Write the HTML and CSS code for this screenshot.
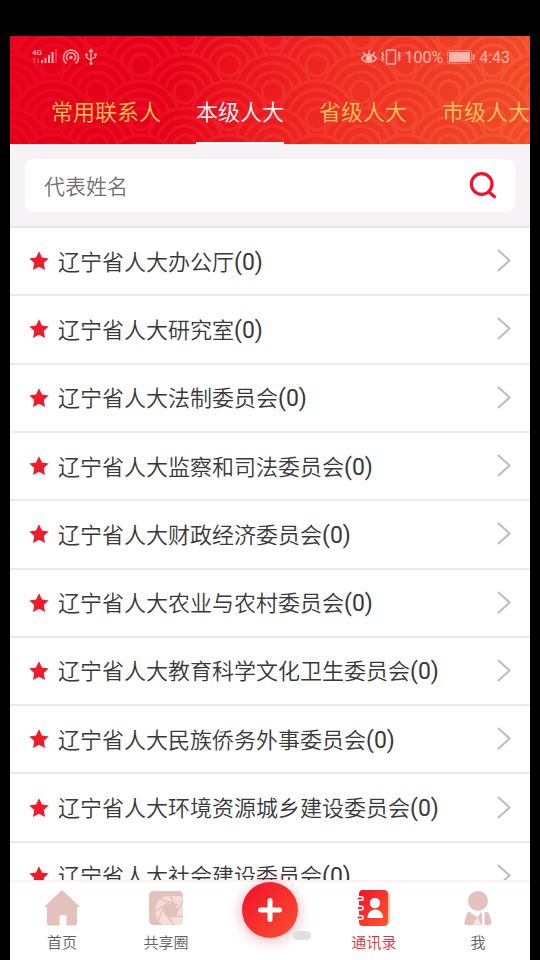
FILE: index.html
```html
<!DOCTYPE html>
<html lang="zh-CN">
<head>
<meta charset="utf-8">
<meta name="viewport" content="width=device-width, initial-scale=1">
<title>通讯录</title>
<link rel="stylesheet" href="styles.css">
</head>
<body>
<svg class="defs" aria-hidden="true">
  <defs>
    <g id="rings" fill="#000" stroke="#fff" stroke-width="3.400">
      <circle r="38"/><circle r="29"/><circle r="20"/><circle r="11"/>
    </g>
    <symbol id="star" viewBox="0 0 20 20"><path fill="#ee1c2b" d="M10 .3l3 6.200 6.700.9-4.900 4.700 1.200 6.800L10 15.700l-6 3.200 1.200-6.800L.3 7.400l6.700-.9z"/></symbol>
    <symbol id="chevron" viewBox="0 0 14 24"><path fill="none" stroke="#bcbcbc" stroke-width="2" d="M1 1l11.500 10.500L1 22"/></symbol>
    <linearGradient id="warm" x1="0" y1="0" x2="1" y2="1"><stop offset="0" stop-color="#f0112a"/><stop offset="1" stop-color="#ff5730"/></linearGradient>
  </defs>
</svg>
<div class="phone">
  <header class="header">
    <svg class="waves" aria-hidden="true">
      <defs>
        <pattern id="scales" x="-1" y="2" width="88" height="54" patternUnits="userSpaceOnUse">
          <use href="#rings" x="44" y="-27"/>
          <use href="#rings" x="0" y="0"/><use href="#rings" x="88" y="0"/>
          <use href="#rings" x="44" y="27"/>
          <use href="#rings" x="0" y="54"/><use href="#rings" x="88" y="54"/>
          <use href="#rings" x="44" y="81"/>
        </pattern>
        <mask id="scaleMask"><rect width="100%" height="100%" fill="url(#scales)"/></mask>
        <linearGradient id="tint"><stop offset="0" stop-color="#ff3050" stop-opacity=".16"/><stop offset="1" stop-color="#ff7850" stop-opacity=".32"/></linearGradient>
      </defs>
      <rect width="100%" height="100%" fill="url(#tint)" mask="url(#scaleMask)"/>
    </svg>
    <div class="status">
      <div class="status-group">
        <svg width="26" height="20" viewBox="0 0 26 20" fill="none" stroke="currentColor">
          <text class="network" x="0" y="8">4G</text>
          <path stroke-width="1" opacity=".5" d="M2.500 11v5M1 12.500L2.500 11M6 11v5M6 16l1.500-1.500"/>
          <path stroke-width="2" d="M10 13v3M13.500 11v5M17 8v8M20.500 5v11"/><path stroke-width="2" opacity=".3" d="M24 2v14"/>
        </svg>
        <svg width="18" height="18" viewBox="0 0 18 18" fill="none" stroke="currentColor" stroke-width="1.500">
          <path d="M4.500 15.500a7.500 7.500 0 1 1 9 0M6 12.500a4.500 4.500 0 1 1 6 0"/><circle cx="9" cy="9.500" r="1.700" fill="currentColor" stroke="none"/>
        </svg>
        <svg width="14" height="18" viewBox="0 0 14 18" fill="none" stroke="currentColor" stroke-width="1.300">
          <path d="M7 2v13M7 12.500L2.500 9.500V6M7 11l4.500-2V6M5 4l2-2.500L9 4"/><circle cx="7" cy="15.500" r="1.500" fill="currentColor" stroke="none"/><circle cx="2.500" cy="6.500" r="1.200" fill="currentColor" stroke="none"/><path d="M10.200 5.500h2.600v2h-2.600z" fill="currentColor" stroke="none"/>
        </svg>
      </div>
      <div class="status-group tight">
        <svg width="18" height="16" viewBox="0 0 18 16" fill="none" stroke="currentColor" stroke-width="1.500">
          <path d="M1.500 9.500c4-5.500 11-5.500 15 0-4 5-11 5-15 0zM3 3l2 2.500M9 1.500V5M15 3l-2 2.500"/><circle cx="9" cy="9.500" r="2.500" fill="currentColor"/>
        </svg>
        <svg width="20" height="18" viewBox="1 0 20 18" fill="none" stroke="currentColor" stroke-width="1.400">
          <rect x="6.500" y="2" width="9" height="14" rx="1"/><path d="M3.500 4L2 5.500 3.500 7 2 8.500 3.500 10 2 11.500 3.500 13M18.500 4L20 5.500 18.500 7 20 8.500 18.500 10 20 11.500 18.500 13"/>
        </svg>
        <span>100%</span>
        <svg width="30" height="14" viewBox="-1 0 30 14" fill="none" stroke="currentColor">
          <rect x=".7" y=".7" width="23.600" height="12.600" rx="1.500" opacity=".6"/><rect x="2" y="2" width="21" height="10" fill="currentColor" stroke="none"/><path stroke-width="1.600" d="M26.500 4v6"/>
        </svg>
        <span>4:43</span>
      </div>
    </div>
    <nav class="tabs">
      <a href="#common">常用联系人</a>
      <a href="#own" class="active" aria-current="page">本级人大</a>
      <a href="#province">省级人大</a>
      <a href="#city">市级人大</a>
    </nav>
  </header>
  <form class="search">
    <div class="search-box">
      <input type="text" placeholder="代表姓名" aria-label="代表姓名">
      <button type="button" aria-label="搜索">
        <svg width="28" height="28" viewBox="0 0 28 28" fill="none" stroke="#f0142f" stroke-width="3.200" stroke-linecap="round"><circle cx="12.700" cy="12" r="10.300"/><path d="M20 20l5.500 4.800"/></svg>
      </button>
    </div>
  </form>
  <main class="scroller">
    <ul class="list">
      <li><a href="#1"><svg class="star"><use href="#star"/></svg><span class="name">辽宁省人大办公厅<span class="count">(0)</span></span><svg class="chevron"><use href="#chevron"/></svg></a></li>
      <li><a href="#2"><svg class="star"><use href="#star"/></svg><span class="name">辽宁省人大研究室<span class="count">(0)</span></span><svg class="chevron"><use href="#chevron"/></svg></a></li>
      <li><a href="#3"><svg class="star"><use href="#star"/></svg><span class="name">辽宁省人大法制委员会<span class="count">(0)</span></span><svg class="chevron"><use href="#chevron"/></svg></a></li>
      <li><a href="#4"><svg class="star"><use href="#star"/></svg><span class="name">辽宁省人大监察和司法委员会<span class="count">(0)</span></span><svg class="chevron"><use href="#chevron"/></svg></a></li>
      <li><a href="#5"><svg class="star"><use href="#star"/></svg><span class="name">辽宁省人大财政经济委员会<span class="count">(0)</span></span><svg class="chevron"><use href="#chevron"/></svg></a></li>
      <li><a href="#6"><svg class="star"><use href="#star"/></svg><span class="name">辽宁省人大农业与农村委员会<span class="count">(0)</span></span><svg class="chevron"><use href="#chevron"/></svg></a></li>
      <li><a href="#7"><svg class="star"><use href="#star"/></svg><span class="name">辽宁省人大教育科学文化卫生委员会<span class="count">(0)</span></span><svg class="chevron"><use href="#chevron"/></svg></a></li>
      <li><a href="#8"><svg class="star"><use href="#star"/></svg><span class="name">辽宁省人大民族侨务外事委员会<span class="count">(0)</span></span><svg class="chevron"><use href="#chevron"/></svg></a></li>
      <li><a href="#9"><svg class="star"><use href="#star"/></svg><span class="name">辽宁省人大环境资源城乡建设委员会<span class="count">(0)</span></span><svg class="chevron"><use href="#chevron"/></svg></a></li>
      <li><a href="#10"><svg class="star"><use href="#star"/></svg><span class="name">辽宁省人大社会建设委员会<span class="count">(0)</span></span><svg class="chevron"><use href="#chevron"/></svg></a></li>
    </ul>
  </main>
  <nav class="bottom">
    <a href="#home">
      <svg width="36" height="36" viewBox="0 0 36 36" fill="#e5c1bc"><path d="M16.500 1.200q1.500-1.400 3 0L35 16q1 1.600-1 1.600h-1V33.500q0 2-2 2h-8.500V27q0-2-2-2h-3q-2 0-2 2v8.500H5q-2 0-2-2V17.600H2q-2 0-1-1.600z"/></svg>
      <span>首页</span>
    </a>
    <a href="#circle">
      <svg width="36" height="36" viewBox="0 0 36 36"><rect x="1" y="1" width="34" height="34" rx="4.500" fill="#e5c1bc"/>
        <path fill="#f4dcd8" d="M19 6h12q4 0 4 4v20q0 5-5 5H15Q7 30 7 20 8 8 19 6z"/>
        <circle cx="22.500" cy="20.500" r="7" fill="#e5c1bc"/>
        <path fill="none" stroke="#e5c1bc" stroke-width="1.500" d="M12 9l18 6M22 5l7 15M35 10L27 26M35 26l-16 1M26 35l-9-12M10 31l6-14M7 21l14-8"/></svg>
      <span>共享圈</span>
    </a>
    <div class="add-slot">
      <button class="add" type="button" aria-label="新增">
        <svg width="26" height="26" viewBox="0 0 26 26" stroke="#fff" stroke-width="5" stroke-linecap="round"><path d="M13 3.500v19M3.500 13h19"/></svg>
      </button>
      <i class="pill"></i>
    </div>
    <a href="#contacts" class="current" aria-current="page">
      <svg width="36" height="36" viewBox="0 0 36 36"><rect x="6" y="2" width="28" height="33" rx="4" fill="#ffc5a8"/><rect x="3" y="0" width="29" height="36" rx="4" fill="url(#warm)"/>
        <circle cx="19" cy="13" r="5.200" fill="#fff"/><path fill="#fff" d="M11.500 28c0-11.500 15.500-11.500 15.500 0z"/>
        <g stroke-linecap="round"><path stroke="#fff" stroke-width="5" d="M3 8.500h2.500M3 18h2.500M3 27.500h2.500"/><path stroke="#ef2d35" stroke-width="1.800" d="M2.500 8.500h3M2.500 18h3M2.500 27.500h3"/></g></svg>
      <span>通讯录</span>
    </a>
    <a href="#me">
      <svg width="36" height="36" viewBox="0 0 36 36" fill="#e5c1bc"><circle cx="18" cy="11" r="10"/><path d="M7.500 22.500q2-1.500 3.500.5l6 4-3.500 8H6.500q-2.500 0-2-2.500.5-5 3-10zM24.500 35V23q2-2.500 4 0 2.500 4 3 9.500.2 2.500-2 2.500z"/><path d="M15.500 29l6.500-7v13h-3z"/><path d="M17.500 27l4 8h-7.500z" fill="#f6e3e0"/></svg>
      <span>我</span>
    </a>
  </nav>
</div>
</body>
</html>
```
FILE: styles.css
```css
* { box-sizing: border-box; }

body {
  margin: 0;
  background: #000;
  color: #383838;
  font-family: Roboto, "Noto Sans CJK SC", sans-serif;
  font-weight: 350;
}

a { color: inherit; text-decoration: none; }
button { border: 0; padding: 0; background: none; }
svg { display: block; flex: none; }

.defs { position: absolute; width: 0; height: 0; }

.phone {
  display: flex;
  flex-direction: column;
  height: 100vh;
  padding: 36px 10px 0;
}

.header {
  position: relative;
  flex: none;
  overflow: hidden;
  background: linear-gradient(100deg, #e60019 0%, #e60019 30%, #ef2b22 62%, #f04c28 100%);
}

.waves { position: absolute; inset: 0; width: 100%; height: 100%; }

.status {
  position: relative;
  display: flex;
  justify-content: space-between;
  align-items: center;
  height: 42px;
  padding: 0 20px 0 22px;
  color: #ffb4ac;
  font-size: 16px;
  font-weight: 400;
}

.status-group { display: flex; align-items: center; gap: 4px; }
.status-group.tight { gap: 3px; }

.network {
  fill: currentColor;
  stroke: none;
  font-size: 8px;
  font-weight: 500;
}

.tabs {
  position: relative;
  display: flex;
  gap: 35px;
  height: 66px;
  padding-left: 41px;
  color: #ffc65a;
  font-size: 22px;
  line-height: 24px;
  white-space: nowrap;
}

.tabs a { flex: none; padding-top: 23px; border-bottom: 2px solid transparent; }
.tabs .active { color: #fff; border-color: #fff; }

.search {
  flex: none;
  padding: 15px 15px 14px;
  background: #f6f2f6;
  border-bottom: 2px solid #e9e7e9;
}

.search-box {
  display: flex;
  align-items: center;
  height: 53px;
  padding: 0 18px 0 19px;
  border-radius: 9px;
  background: #fff;
}

.search input {
  flex: 1;
  min-width: 0;
  border: 0;
  padding: 2px 0 0;
  outline: 0;
  background: none;
  font: inherit;
  font-size: 21px;
}

.search input::placeholder { color: #707070; opacity: 1; }

.scroller { flex: 1; min-height: 0; overflow: hidden; background: #fff; }

.list {
  display: grid;
  grid-auto-rows: 1fr;
  min-height: 683px;
  margin: 0;
  padding: 0;
  list-style: none;
}

.list li { border-bottom: 2px solid #ece9ec; }

.list a {
  display: flex;
  align-items: center;
  gap: 9px;
  height: 100%;
  padding: 0 19px;
  font-size: 22px;
  line-height: 32px;
}

.name { flex: 1; padding-top: 3px; white-space: nowrap; }
.count { font-size: 23px; font-weight: 400; }
.star { width: 20px; height: 20px; }
.chevron { width: 14px; height: 24px; }

.bottom {
  display: grid;
  grid-template-columns: repeat(5, 1fr);
  flex: none;
  height: 80px;
  border-top: 2px solid #fdf0f3;
  background: #fff;
  color: #606060;
  font-size: 15px;
}

.bottom a {
  display: flex;
  flex-direction: column;
  align-items: center;
  gap: 5px;
  padding-top: 8px;
  line-height: 24px;
}

.bottom .current { color: #e0303c; }

.add-slot { position: relative; display: flex; justify-content: center; align-items: start; }

.add {
  display: grid;
  place-items: center;
  width: 56px;
  height: 56px;
  border-radius: 50%;
  background: linear-gradient(135deg, #f0102a, #fb5030);
  box-shadow: 0 2px 14px rgba(255, 60, 90, .45);
}

.pill {
  position: absolute;
  left: 75px;
  top: 49px;
  width: 18px;
  height: 9px;
  border-radius: 5px;
  background: #e0e0e0;
}
```
